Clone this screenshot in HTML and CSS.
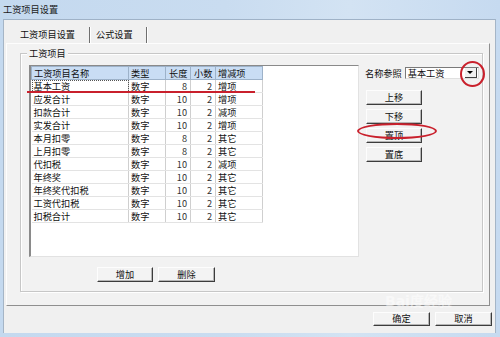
FILE: index.html
```html
<!DOCTYPE html>
<html lang="zh-CN">
<head>
  <meta charset="UTF-8">
  <title>工资项目设置</title>
  <link rel="stylesheet" href="styles.css">
</head>
<body>
  <div class="window">
    <div class="titlebar">工资项目设置</div>
    <div class="client">
      <div class="tabs">
        <div class="tab active">工资项目设置</div>
        <div class="tab">公式设置</div>
      </div>
      <div class="panel">
        <div class="group">
          <span class="group-title">工资项目</span>
          <div class="group-body">
            <div class="list-col">
              <div class="listview">
                <table>
                  <thead>
                    <tr>
                      <th class="c-name">工资项目名称</th>
                      <th class="c-type">类型</th>
                      <th class="c-len">长度</th>
                      <th class="c-dec">小数</th>
                      <th class="c-kind">增减项</th>
                    </tr>
                  </thead>
                  <tbody>
                    <tr><td class="focus">基本工资</td><td>数字</td><td class="num">8</td><td class="num">2</td><td>增项</td></tr>
                    <tr><td>应发合计</td><td>数字</td><td class="num">10</td><td class="num">2</td><td>增项</td></tr>
                    <tr><td>扣款合计</td><td>数字</td><td class="num">10</td><td class="num">2</td><td>减项</td></tr>
                    <tr><td>实发合计</td><td>数字</td><td class="num">10</td><td class="num">2</td><td>增项</td></tr>
                    <tr><td>本月扣零</td><td>数字</td><td class="num">8</td><td class="num">2</td><td>其它</td></tr>
                    <tr><td>上月扣零</td><td>数字</td><td class="num">8</td><td class="num">2</td><td>其它</td></tr>
                    <tr><td>代扣税</td><td>数字</td><td class="num">10</td><td class="num">2</td><td>减项</td></tr>
                    <tr><td>年终奖</td><td>数字</td><td class="num">10</td><td class="num">2</td><td>其它</td></tr>
                    <tr><td>年终奖代扣税</td><td>数字</td><td class="num">10</td><td class="num">2</td><td>其它</td></tr>
                    <tr><td>工资代扣税</td><td>数字</td><td class="num">10</td><td class="num">2</td><td>其它</td></tr>
                    <tr><td>扣税合计</td><td>数字</td><td class="num">10</td><td class="num">2</td><td>其它</td></tr>
                  </tbody>
                </table>
              </div>
              <div class="list-actions">
                <button class="btn btn-add">增加</button>
                <button class="btn btn-del">删除</button>
              </div>
            </div>
            <div class="side">
              <div class="ref-row">
                <span class="ref-label">名称参照</span>
                <div class="combo">
                  <span class="combo-text">基本工资</span>
                  <span class="combo-drop"><span class="arrow"></span></span>
                </div>
              </div>
              <div class="side-buttons">
                <button class="btn">上移</button>
                <button class="btn">下移</button>
                <button class="btn">置顶</button>
                <button class="btn">置底</button>
              </div>
            </div>
          </div>
        </div>
      </div>
      <div class="dialog-buttons">
        <button class="btn btn-ok">确定</button>
        <button class="btn btn-cancel">取消</button>
      </div>
    </div>

    <!-- hand-drawn red annotations -->
    <div class="mark mark-line"></div>
    <div class="mark mark-drop"></div>
    <div class="mark mark-top"></div>
    <div class="watermark">Bai<span class="paw">度</span>经验</div>
  </div>
</body>
</html>
```

FILE: styles.css
```css
* {
  box-sizing: border-box;
}

body {
  margin: 0;
  font-family: "Noto Sans CJK SC", "DejaVu Sans", sans-serif;
  font-size: 9.2px;
  color: #111;
  background: #c3d8ee;
}

.window {
  position: relative;
  width: 500px;
  height: 337px;
  overflow: hidden;
  background: linear-gradient(to right, #c4d9ef, #c9dcf0 45%, #d3e3f3 70%, #c6daf0);
}

.titlebar {
  height: 19px;
  line-height: 18px;
  padding-left: 3px;
  color: #1a1a1a;
}

.client {
  height: 314px;
  margin: 0 4px 0 3px;
  background: #f0f0f0;
  border-top: 1px solid #9fb2c7;
  border-left: 1px solid #a5b5c6;
  border-right: 1px solid #a5b5c6;
  display: flex;
  flex-direction: column;
}

.tabs {
  display: flex;
  height: 20px;
  margin-top: 3px;
  padding-left: 2px;
}

.tab {
  display: flex;
  align-items: center;
  justify-content: center;
  height: 16px;
  margin-top: 4px;
  padding-bottom: 3px;
  border-right: 1px solid #6f6f6f;
  box-shadow: 1px 0 0 #ffffff;
}

.tab.active {
  width: 84px;
}

.tab:not(.active) {
  width: 57px;
  justify-content: flex-start;
  padding-left: 6px;
}

.panel {
  height: 263px;
  margin: 0 5px 0 2px;
  background: #f2f2f2;
  border-top: 1px solid #fdfdfd;
  border-left: 1px solid #fdfdfd;
  border-right: 1px solid #8f8f8f;
  border-bottom: 1px solid #8f8f8f;
  padding: 9px 6px 0 13px;
}

.group {
  position: relative;
  height: 239px;
  border: 1px solid #c7c7c7;
  box-shadow: inset 1px 1px 0 #fff, 1px 1px 0 #fff;
}

.group-title {
  position: absolute;
  top: -7px;
  left: 6px;
  padding: 0 2px;
  background: #f2f2f2;
  line-height: 12px;
}

.group-body {
  display: flex;
  padding: 11px 0 0 8px;
}

.listview {
  width: 330px;
  height: 192px;
  background: #fff;
  border-top: 1px solid #8a8a8a;
  border-left: 2px solid #8a8a8a;
  border-right: 1px solid #e2e2e2;
  border-bottom: 1px solid #e2e2e2;
}

table {
  border-collapse: collapse;
  table-layout: fixed;
  width: 231px;
}

th {
  height: 13px;
  padding: 0 0 0 2px;
  font-weight: normal;
  text-align: left;
  background: #c9ddf4;
  border: 1px solid #9db2c9;
  line-height: 11px;
}

th.c-len,
th.c-dec {
  padding: 0 0 0 3px;
}

.c-name { width: 97px; }
.c-type { width: 37px; }
.c-len { width: 25px; }
.c-dec { width: 25px; }
.c-kind { width: 47px; }

td {
  height: 13px;
  padding: 0 0 0 2px;
  line-height: 11px;
  border-right: 1px solid #cfcfcf;
  border-bottom: 1px solid #e3e3e3;
  white-space: nowrap;
}

td.num {
  text-align: right;
  padding: 0 3px 0 0;
  color: #333;
}

td.focus {
  outline: 1px dotted #555;
  outline-offset: -1px;
}

.list-actions {
  display: flex;
  gap: 5px;
  margin-top: 10px;
  padding-left: 68px;
}

.btn {
  display: flex;
  align-items: center;
  justify-content: center;
  font: inherit;
  color: #111;
  width: 56px;
  height: 15px;
  padding: 0 0 1px;
  line-height: 11px;
  background: #f3f3f3;
  border-top: 1px solid #fdfdfd;
  border-left: 1px solid #fdfdfd;
  border-right: 1px solid #3c3c3c;
  border-bottom: 1px solid #3c3c3c;
  box-shadow: inset -1px -1px 0 #b5b5b5;
}

.btn-del {
  width: 57px;
}

.side {
  margin-left: 6px;
}

.ref-row {
  display: flex;
  align-items: center;
  gap: 3px;
  margin-top: 1px;
}

.combo {
  display: flex;
  align-items: center;
  justify-content: space-between;
  width: 74px;
  height: 12px;
  background: #fff;
  border-top: 1px solid #7a7a7a;
  border-left: 1px solid #7a7a7a;
  border-right: 1px solid #e0e0e0;
  border-bottom: 1px solid #e0e0e0;
  padding-left: 2px;
  line-height: 10px;
}

.combo-drop {
  display: flex;
  align-items: center;
  justify-content: center;
  width: 12px;
  height: 10px;
  margin-right: 1px;
  background: #f0f0f0;
  border-right: 1px solid #404040;
  border-bottom: 1px solid #404040;
}

.arrow {
  width: 0;
  height: 0;
  border-left: 3px solid transparent;
  border-right: 3px solid transparent;
  border-top: 3px solid #000;
}

.side-buttons {
  display: flex;
  flex-direction: column;
  gap: 4px;
  margin: 10px 0 0 1px;
}

.dialog-buttons {
  display: flex;
  justify-content: flex-end;
  gap: 5px;
  margin-top: 6px;
  padding-right: 3px;
}

.btn-ok,
.btn-cancel {
  width: 57px;
  height: 14px;
}

/* annotations drawn over the screenshot */
.mark {
  position: absolute;
  border: 2px solid #c9202c;
}

.mark-line {
  left: 27px;
  top: 91px;
  width: 228px;
  height: 0;
  border-width: 1px 0;
}

.mark-drop {
  left: 460px;
  top: 61px;
  width: 25px;
  height: 26px;
  border-radius: 50%;
}

.mark-top {
  left: 357px;
  top: 123px;
  width: 80px;
  height: 16px;
  border-radius: 50%;
}

.watermark {
  position: absolute;
  left: 385px;
  top: 293px;
  font-family: "DejaVu Sans", sans-serif;
  font-size: 14px;
  line-height: 14px;
  font-weight: bold;
  color: rgba(255, 255, 255, 0.5);
}

.watermark .paw {
  font-family: "Noto Sans CJK SC", sans-serif;
}
```
